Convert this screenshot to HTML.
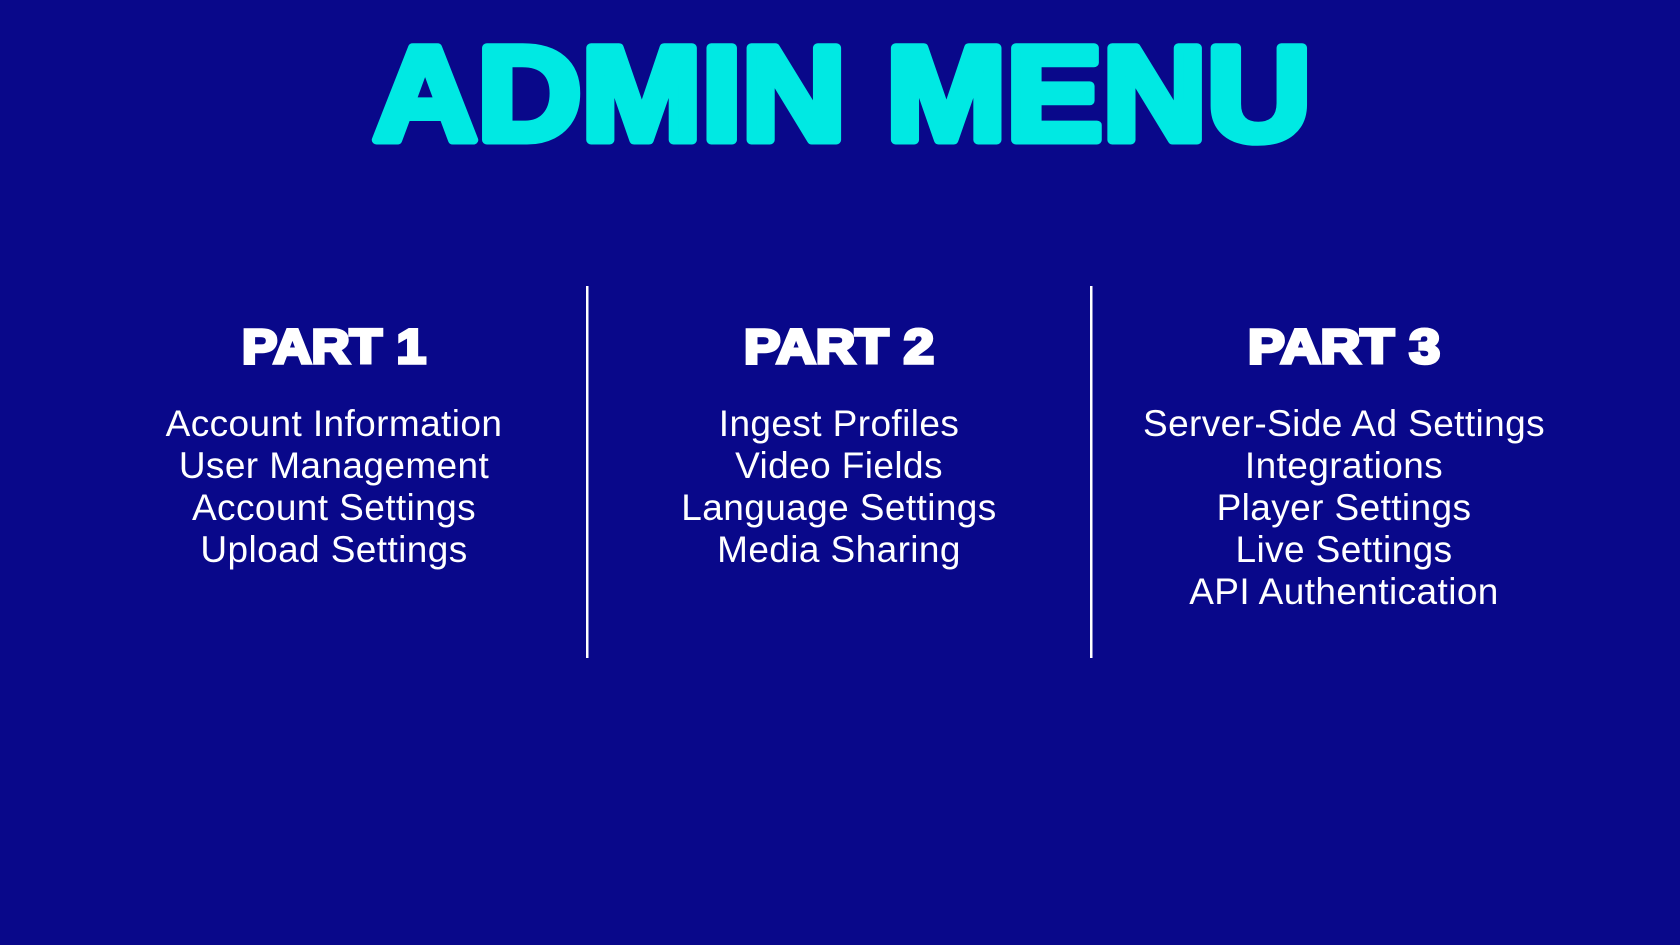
<!DOCTYPE html>
<html><head><meta charset="utf-8"><style>
html,body{margin:0;padding:0;background:#09088a;width:1680px;height:945px;overflow:hidden}
svg{display:block}
</style></head><body>
<svg width="1680" height="945" viewBox="0 0 1680 945" xmlns="http://www.w3.org/2000/svg">
<rect width="1680" height="945" fill="#09088a"/>
<text x="842" y="140" text-anchor="middle" font-family="Liberation Sans, sans-serif" font-weight="bold" font-size="134" fill="#00e9e3" stroke="#00e9e3" stroke-width="9" stroke-linejoin="round" textLength="938" lengthAdjust="spacingAndGlyphs">ADMIN MENU</text>
<g font-family="Liberation Sans, sans-serif" font-weight="bold" font-size="48" fill="#fff" stroke="#fff" stroke-width="3.5" text-anchor="middle">
<text x="334" y="363" textLength="184" lengthAdjust="spacingAndGlyphs">PART 1</text>
<text x="839" y="363" textLength="190" lengthAdjust="spacingAndGlyphs">PART 2</text>
<text x="1344" y="363" textLength="192" lengthAdjust="spacingAndGlyphs">PART 3</text>
</g>
<rect x="586" y="286" width="2.5" height="372" fill="#fff"/>
<rect x="1090" y="286" width="2.5" height="372" fill="#fff"/>
<g font-family="Liberation Sans, sans-serif" font-size="37" fill="#fff" text-anchor="middle" letter-spacing="0.4">
<text x="334" y="436">Account Information</text>
<text x="334" y="478">User Management</text>
<text x="334" y="520">Account Settings</text>
<text x="334" y="562">Upload Settings</text>
<text x="839" y="436">Ingest Profiles</text>
<text x="839" y="478">Video Fields</text>
<text x="839" y="520">Language Settings</text>
<text x="839" y="562">Media Sharing</text>
<text x="1344" y="436">Server-Side Ad Settings</text>
<text x="1344" y="478">Integrations</text>
<text x="1344" y="520">Player Settings</text>
<text x="1344" y="562">Live Settings</text>
<text x="1344" y="604">API Authentication</text>
</g>
</svg>
</body></html>
